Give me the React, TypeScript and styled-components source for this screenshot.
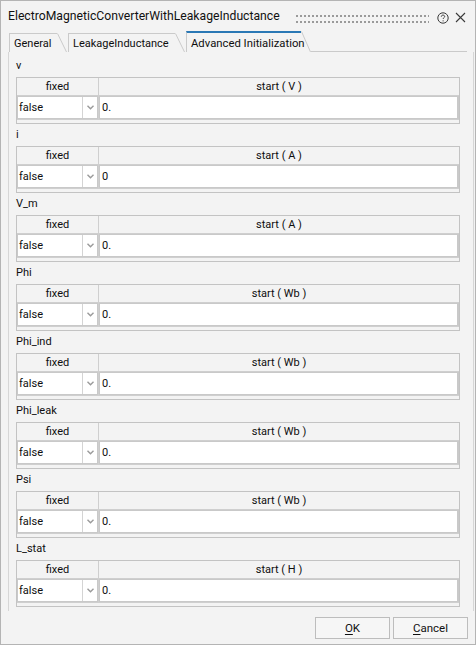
import styled, { createGlobalStyle } from "styled-components"

const GlobalStyle = createGlobalStyle`
  html, body { margin: 0; padding: 0; background: #f3f3f3; }
  body { font-family: Roboto, "Liberation Sans", sans-serif; font-size: 11px; color: #0e0e0e; }
  * { box-sizing: border-box; }
`

const Window = styled.div`
  width: 476px;
  height: 645px;
  border: 1px solid #b4b4b4;
  background: #f3f3f3;
  display: flex;
  flex-direction: column;
`

const TitleBar = styled.div`
  height: 30px;
  display: flex;
  align-items: center;
  padding: 0 9px 0 7px;
`

const Title = styled.div`
  font-size: 12.2px;
  white-space: nowrap;
  color: #111;
`

const Grip = styled.div`
  flex: 1;
  height: 12px;
  margin: 5px 8px 0 15px;
  background-image: radial-gradient(circle, #9a9a9a 0.8px, transparent 1.2px);
  background-size: 4px 6px;
`

const TitleIcons = styled.div`
  display: flex;
  align-items: center;
  gap: 6px;
  margin-top: 3px;
`

const TabBar = styled.div`
  height: 21px;
  display: flex;
  align-items: flex-end;
  padding: 0 8px 0 8px;
`

const Tab = styled.div<{ $active?: boolean }>`
  display: flex;
  height: ${p => (p.$active ? "21px" : "19px")};
  margin-right: ${p => (p.$active ? "0" : "1px")};
`

const TabLabel = styled.div<{ $active?: boolean; $w: number }>`
  width: ${p => p.$w}px;
  border-left: 1px solid #cacaca;
  border-top: ${p => (p.$active ? "2px solid #2a78b5" : "1px solid #cacaca")};
  padding: 1px 0 0 4px;
  display: flex;
  align-items: center;
  white-space: nowrap;
  font-size: ${p => (p.$active ? "11.3px" : "11px")};
`

const TabRule = styled.div`
  flex: 1;
  height: 1px;
  background: #cacaca;
`

const Pane = styled.div`
  flex: 1;
  margin: 0 1px 0 7px;
  border-left: 1px solid #d6d6d6;
  border-right: 1px solid #d6d6d6;
  padding: 6px 0 0 7px;
  overflow: hidden;
`

const Group = styled.div`
  height: 69px;
  display: flex;
  flex-direction: column;
`

const GroupLabel = styled.div`
  height: 16px;
  line-height: 16px;
  margin-bottom: 3px;
`

const Table = styled.div`
  width: 444px;
  height: 47px;
  border: 1px solid #c3c3c3;
  display: flex;
  flex-direction: column;
`

const HeaderRow = styled.div`
  display: grid;
  grid-template-columns: 82px 1fr;
  height: 18px;
  border-bottom: 1px solid #cfcfcf;
`

const HeaderCell = styled.div<{ $divider?: boolean }>`
  display: flex;
  align-items: center;
  justify-content: center;
  border-right: ${p => (p.$divider ? "1px solid #cfcfcf" : "none")};
  white-space: pre;
`

const DataRow = styled.div`
  display: grid;
  grid-template-columns: 82px 1fr;
  height: 24px;
  border-bottom: 1px solid #cfcfcf;
`

const FixedCell = styled.div`
  border-right: 1px solid #cfcfcf;
  display: flex;
`

const SelectBox = styled.div`
  flex: 1;
  display: grid;
  grid-template-columns: 65px 1fr;
  background: #fff;
  border: 1px solid #c9c9c9;
`

const SelectText = styled.div`
  display: flex;
  align-items: center;
  padding-left: 1px;
  border-right: 1px solid #d4d4d4;
`

const SelectArrow = styled.div`
  display: flex;
  align-items: center;
  justify-content: center;
`

const ValueBox = styled.div`
  background: #fff;
  border: 1px solid #c9c9c9;
  border-right-width: 2px;
  display: flex;
  align-items: center;
  padding-left: 2px;
`

const ButtonRow = styled.div`
  display: flex;
  justify-content: flex-end;
  gap: 3px;
  padding: 6px 7px 5px 0;
`

const Button = styled.button`
  width: 75px;
  height: 22px;
  border: 1px solid #bdbdbd;
  background: #f6f6f6;
  font-family: Roboto, "Liberation Sans", sans-serif;
  font-size: 11.5px;
  color: #111;
  padding: 0;
  u { text-decoration-thickness: 1px; text-underline-offset: 2px; }
`

const rows: [string, string, string][] = [
  ["v", "V", "0."],
  ["i", "A", "0"],
  ["V_m", "A", "0."],
  ["Phi", "Wb", "0."],
  ["Phi_ind", "Wb", "0."],
  ["Phi_leak", "Wb", "0."],
  ["Psi", "Wb", "0."],
  ["L_stat", "H", "0."],
]

const tabs = [
  { name: "General", w: 48 },
  { name: "LeakageInductance", w: 107 },
  { name: "Advanced Initialization", w: 115, active: true },
]

function Slant({ h }: { h: number }) {
  return (
    <svg width="10" height={h} style={{ display: "block" }}>
      <line x1="0.5" y1="0.5" x2="9.5" y2={h} stroke="#cacaca" strokeWidth="1" />
    </svg>
  )
}

function HelpIcon() {
  return (
    <svg width="12" height="12" viewBox="0 0 12 12">
      <circle cx="6" cy="6" r="5.2" fill="none" stroke="#3a3a3a" strokeWidth="1" />
      <path d="M4.3 4.7 C4.3 3.6 5.1 3.1 6 3.1 C6.9 3.1 7.7 3.7 7.7 4.6 C7.7 5.6 6.1 5.8 6.1 7" fill="none" stroke="#3a3a3a" strokeWidth="1" />
      <circle cx="6.1" cy="8.8" r="0.6" fill="#3a3a3a" />
    </svg>
  )
}

function CloseIcon() {
  return (
    <svg width="11" height="11" viewBox="0 0 11 11">
      <path d="M1 1 L10 10 M10 1 L1 10" stroke="#3a3a3a" strokeWidth="1.1" />
    </svg>
  )
}

function Chevron() {
  return (
    <svg width="7" height="5" viewBox="0 0 7 5">
      <path d="M0.5 0.8 L3.5 3.8 L6.5 0.8" fill="none" stroke="#9a9a9a" strokeWidth="1.4" />
    </svg>
  )
}

export default function App() {
  return (
    <>
      <GlobalStyle />
      <Window>
        <TitleBar>
          <Title>ElectroMagneticConverterWithLeakageInductance</Title>
          <Grip />
          <TitleIcons>
            <HelpIcon />
            <CloseIcon />
          </TitleIcons>
        </TitleBar>
        <TabBar>
          {tabs.map(t => (
            <Tab key={t.name} $active={t.active}>
              <TabLabel $active={t.active} $w={t.w}>{t.name}</TabLabel>
              <Slant h={t.active ? 21 : 19} />
            </Tab>
          ))}
          <TabRule />
        </TabBar>
        <Pane>
          {rows.map(([name, unit, value]) => (
            <Group key={name}>
              <GroupLabel>{name}</GroupLabel>
              <Table>
                <HeaderRow>
                  <HeaderCell $divider>fixed</HeaderCell>
                  <HeaderCell>{`start ( ${unit} )`}</HeaderCell>
                </HeaderRow>
                <DataRow>
                  <FixedCell>
                    <SelectBox>
                      <SelectText>false</SelectText>
                      <SelectArrow>
                        <Chevron />
                      </SelectArrow>
                    </SelectBox>
                  </FixedCell>
                  <ValueBox>{value}</ValueBox>
                </DataRow>
              </Table>
            </Group>
          ))}
        </Pane>
        <ButtonRow>
          <Button><u>O</u>K</Button>
          <Button><u>C</u>ancel</Button>
        </ButtonRow>
      </Window>
    </>
  )
}
